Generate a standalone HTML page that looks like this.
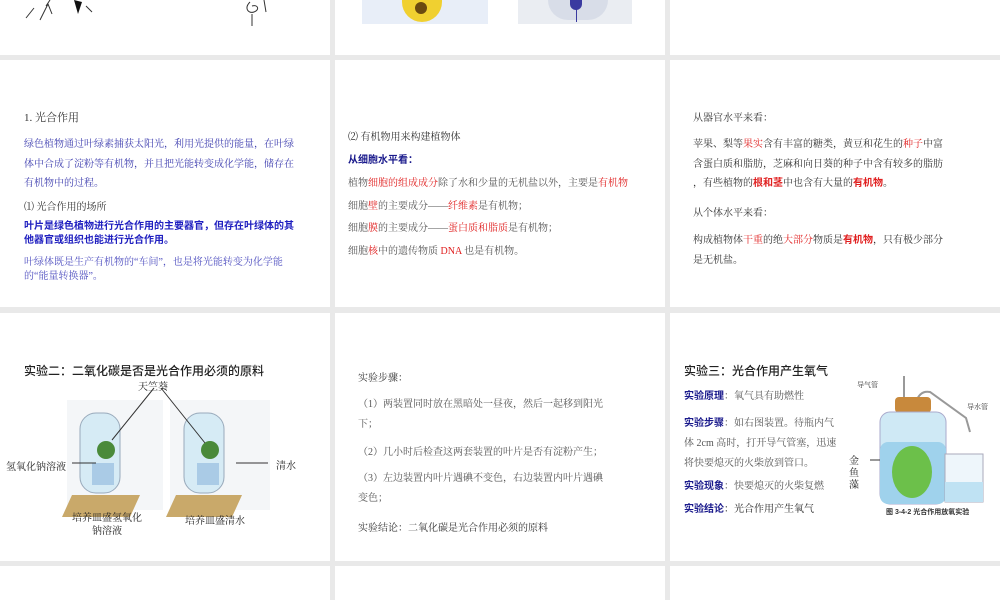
<!DOCTYPE html>
<html><head><meta charset="utf-8"><style>
body{margin:0;width:1000px;height:600px;background:#e9e9e9;position:relative;overflow:hidden;font-family:"Liberation Serif","Noto Serif CJK SC","Noto Sans CJK SC",serif;}
.s{position:absolute;background:#fff;}
.t{position:absolute;white-space:nowrap;font-size:10px;color:#555;}
.b{font-family:"Liberation Sans","Noto Sans CJK SC",sans-serif;font-weight:bold;}
.r{color:#e02020;}
.bl{color:#4040b0;}
.nv{color:#1a1a8c;}
.h{font-family:"Liberation Sans","Noto Sans CJK SC",sans-serif;font-size:12px;color:#222;font-weight:500;}
</style></head><body>
<div class="s" style="left:0;top:0;width:330px;height:55px"></div>
<div class="s" style="left:335px;top:0;width:330px;height:55px"></div>
<div class="s" style="left:670px;top:0;width:330px;height:55px"></div>
<div class="s" style="left:0;top:60px;width:330px;height:247px"></div>
<div class="s" style="left:335px;top:60px;width:330px;height:247px"></div>
<div class="s" style="left:670px;top:60px;width:330px;height:247px"></div>
<div class="s" style="left:0;top:313px;width:330px;height:248px"></div>
<div class="s" style="left:335px;top:313px;width:330px;height:248px"></div>
<div class="s" style="left:670px;top:313px;width:330px;height:248px"></div>
<div class="s" style="left:0;top:566px;width:330px;height:34px"></div>
<div class="s" style="left:335px;top:566px;width:330px;height:34px"></div>
<div class="s" style="left:670px;top:566px;width:330px;height:34px"></div>

<svg style="position:absolute;left:20px;top:0" width="140" height="30"><path d="M6 18 L14 8 M20 20 L28 4 L32 14 M26 6 L30 0" stroke="#333" fill="none"/><path d="M54 0 L58 14 L62 2 Z" fill="#111"/><path d="M66 6 L72 12" stroke="#333"/></svg>
<svg style="position:absolute;left:230px;top:0" width="70" height="30"><path d="M20 2 C14 8 18 14 24 12 C30 10 28 4 22 6 M22 14 L22 26 M34 0 L36 12" stroke="#333" fill="none"/></svg>
<div style="position:absolute;left:362px;top:0;width:126px;height:24px;background:#e8eef8"><div style="position:absolute;left:40px;top:0;width:40px;height:22px;border-radius:0 0 20px 20px;background:#f0d030"></div><div style="position:absolute;left:53px;top:2px;width:12px;height:12px;border-radius:50%;background:#6a4a10"></div></div>
<div style="position:absolute;left:518px;top:0;width:114px;height:24px;background:#eaedf2"><div style="position:absolute;left:30px;top:0;width:60px;height:20px;border-radius:0 0 30px 30px;background:#d8dde8"></div><div style="position:absolute;left:52px;top:0;width:12px;height:10px;background:#3a3aa0;border-radius:0 0 6px 6px"></div><div style="position:absolute;left:58px;top:0;width:1px;height:22px;background:#3a3aa0"></div></div>

<div class="t" style="left:24px;top:109px;font-size:11px;color:#333">1. 光合作用</div>
<div class="t bl" style="left:24px;top:135px;line-height:19.5px">绿色植物通过叶绿素捕获太阳光，利用光提供的能量，在叶绿<br>体中合成了淀粉等有机物，并且把光能转变成化学能，储存在<br>有机物中的过程。</div>
<div class="t" style="left:24px;top:198px;color:#333">⑴ 光合作用的场所</div>
<div class="t b" style="left:24px;top:220px;color:#2020c0;line-height:14px">叶片是绿色植物进行光合作用的主要器官，但存在叶绿体的其<br>他器官或组织也能进行光合作用。</div>
<div class="t bl" style="left:24px;top:256px;line-height:14px;color:#5050c0">叶绿体既是生产有机物的“车间”，也是将光能转变为化学能<br>的“能量转换器”。</div>

<div class="t" style="left:348px;top:128px;color:#333">⑵ 有机物用来构建植物体</div>
<div class="t b nv" style="left:348px;top:151px">从细胞水平看：</div>
<div class="t" style="left:348px;top:173px;line-height:22.5px">植物<span class="r">细胞的组成成分</span>除了水和少量的无机盐以外，主要是<span class="r">有机物</span><br>细胞<span class="r">壁</span>的主要成分——<span class="r">纤维素</span>是有机物；<br>细胞<span class="r">膜</span>的主要成分——<span class="r">蛋白质和脂质</span>是有机物；<br>细胞<span class="r">核</span>中的遗传物质 <span class="r">DNA</span> 也是有机物。</div>

<div class="t" style="left:693px;top:109px;color:#333">从器官水平来看：</div>
<div class="t" style="left:693px;top:135px;line-height:19.5px;color:#333">苹果、梨等<span class="r">果实</span>含有丰富的糖类，黄豆和花生的<span class="r">种子</span>中富<br>含蛋白质和脂肪，芝麻和向日葵的种子中含有较多的脂肪<br>，有些植物的<span class="r b">根和茎</span>中也含有大量的<span class="r b">有机物</span>。</div>
<div class="t" style="left:693px;top:204px;color:#333">从个体水平来看：</div>
<div class="t" style="left:693px;top:231px;line-height:19.5px;color:#333">构成植物体<span class="r">干重</span>的绝<span class="r">大部分</span>物质是<span class="r b">有机物</span>，只有极少部分<br>是无机盐。</div>

<div class="t h" style="left:24px;top:362px">实验二：二氧化碳是否是光合作用必须的原料</div>
<div class="t" style="left:138px;top:378px;color:#222">天竺葵</div>
<svg style="position:absolute;left:0;top:385px" width="330" height="160">
<rect x="67" y="15" width="96" height="110" fill="#f4f6f8"/><rect x="170" y="15" width="100" height="110" fill="#f4f6f8"/>
<path d="M72 110 L140 110 L130 132 L62 132 Z" fill="#c9a96a"/><path d="M176 110 L242 110 L232 132 L166 132 Z" fill="#c9a96a"/>
<rect x="80" y="28" width="40" height="80" rx="16" fill="#d6ebf5" stroke="#9ab" /><rect x="184" y="28" width="40" height="80" rx="16" fill="#d6ebf5" stroke="#9ab"/>
<rect x="92" y="78" width="22" height="22" fill="#aacbe6"/><rect x="197" y="78" width="22" height="22" fill="#aacbe6"/>
<circle cx="106" cy="65" r="9" fill="#4a8a3a"/><circle cx="210" cy="65" r="9" fill="#4a8a3a"/>
<path d="M154 3 L112 55 M161 3 L205 58" stroke="#333"/>
<path d="M72 78 L96 78 M236 78 L268 78" stroke="#333"/>
</svg>
<div class="t" style="left:6px;top:458px;color:#222">氢氧化钠溶液</div>
<div class="t" style="left:276px;top:457px;color:#222">清水</div>
<div class="t" style="left:72px;top:512px;color:#222;text-align:center;line-height:13px">培养皿盛氢氧化<br>钠溶液</div>
<div class="t" style="left:185px;top:512px;color:#222">培养皿盛清水</div>

<div class="t" style="left:358px;top:369px;color:#333">实验步骤：</div>
<div class="t" style="left:358px;top:395px;line-height:20px">（1）两装置同时放在黑暗处一昼夜，然后一起移到阳光<br>下；</div>
<div class="t" style="left:358px;top:443px">（2）几小时后检查这两套装置的叶片是否有淀粉产生；</div>
<div class="t" style="left:358px;top:469px;line-height:20px">（3）左边装置内叶片遇碘不变色，右边装置内叶片遇碘<br>变色；</div>
<div class="t" style="left:358px;top:519px;color:#333">实验结论：二氧化碳是光合作用必须的原料</div>

<div class="t h" style="left:684px;top:362px">实验三：光合作用产生氧气</div>
<div class="t" style="left:684px;top:387px"><span class="b nv">实验原理</span>：氧气具有助燃性</div>
<div class="t" style="left:684px;top:414px;line-height:20px"><span class="b nv">实验步骤</span>：如右图装置。待瓶内气<br>体 2cm 高时，打开导气管塞，迅速<br>将快要熄灭的火柴放到管口。</div>
<div class="t" style="left:684px;top:477px"><span class="b nv">实验现象</span>：快要熄灭的火柴复燃</div>
<div class="t" style="left:684px;top:500px;color:#222"><span class="b nv">实验结论</span>：光合作用产生氧气</div>
<div class="t" style="left:849px;top:456px;color:#222;line-height:12px">金<br>鱼<br>藻</div>
<div class="t" style="left:857px;top:380px;font-size:7px;color:#333">导气管</div>
<div class="t" style="left:967px;top:402px;font-size:7px;color:#333">导水管</div>
<svg style="position:absolute;left:870px;top:372px" width="130" height="145">
<path d="M34 4 L34 40 M46 30 Q50 18 60 20 L96 46 L100 60" stroke="#999" stroke-width="2" fill="none"/>
<rect x="25" y="25" width="36" height="16" rx="4" fill="#c8893c"/>
<rect x="10" y="40" width="66" height="92" rx="10" fill="#cfe9f5" stroke="#aac"/>
<rect x="10" y="70" width="66" height="62" rx="8" fill="#9fd2ec"/>
<ellipse cx="42" cy="100" rx="20" ry="26" fill="#6cc04a"/>
<path d="M0 88 L10 88" stroke="#333"/>
<rect x="75" y="82" width="38" height="48" fill="#eef6fb" stroke="#aab"/><rect x="75" y="110" width="38" height="20" fill="#bfe2f3"/>
<text x="16" y="142" font-size="7" fill="#333" font-family="Liberation Sans,Noto Sans CJK SC,sans-serif" font-weight="bold">图 3-4-2 光合作用放氧实验</text>
</svg>
</body></html>
